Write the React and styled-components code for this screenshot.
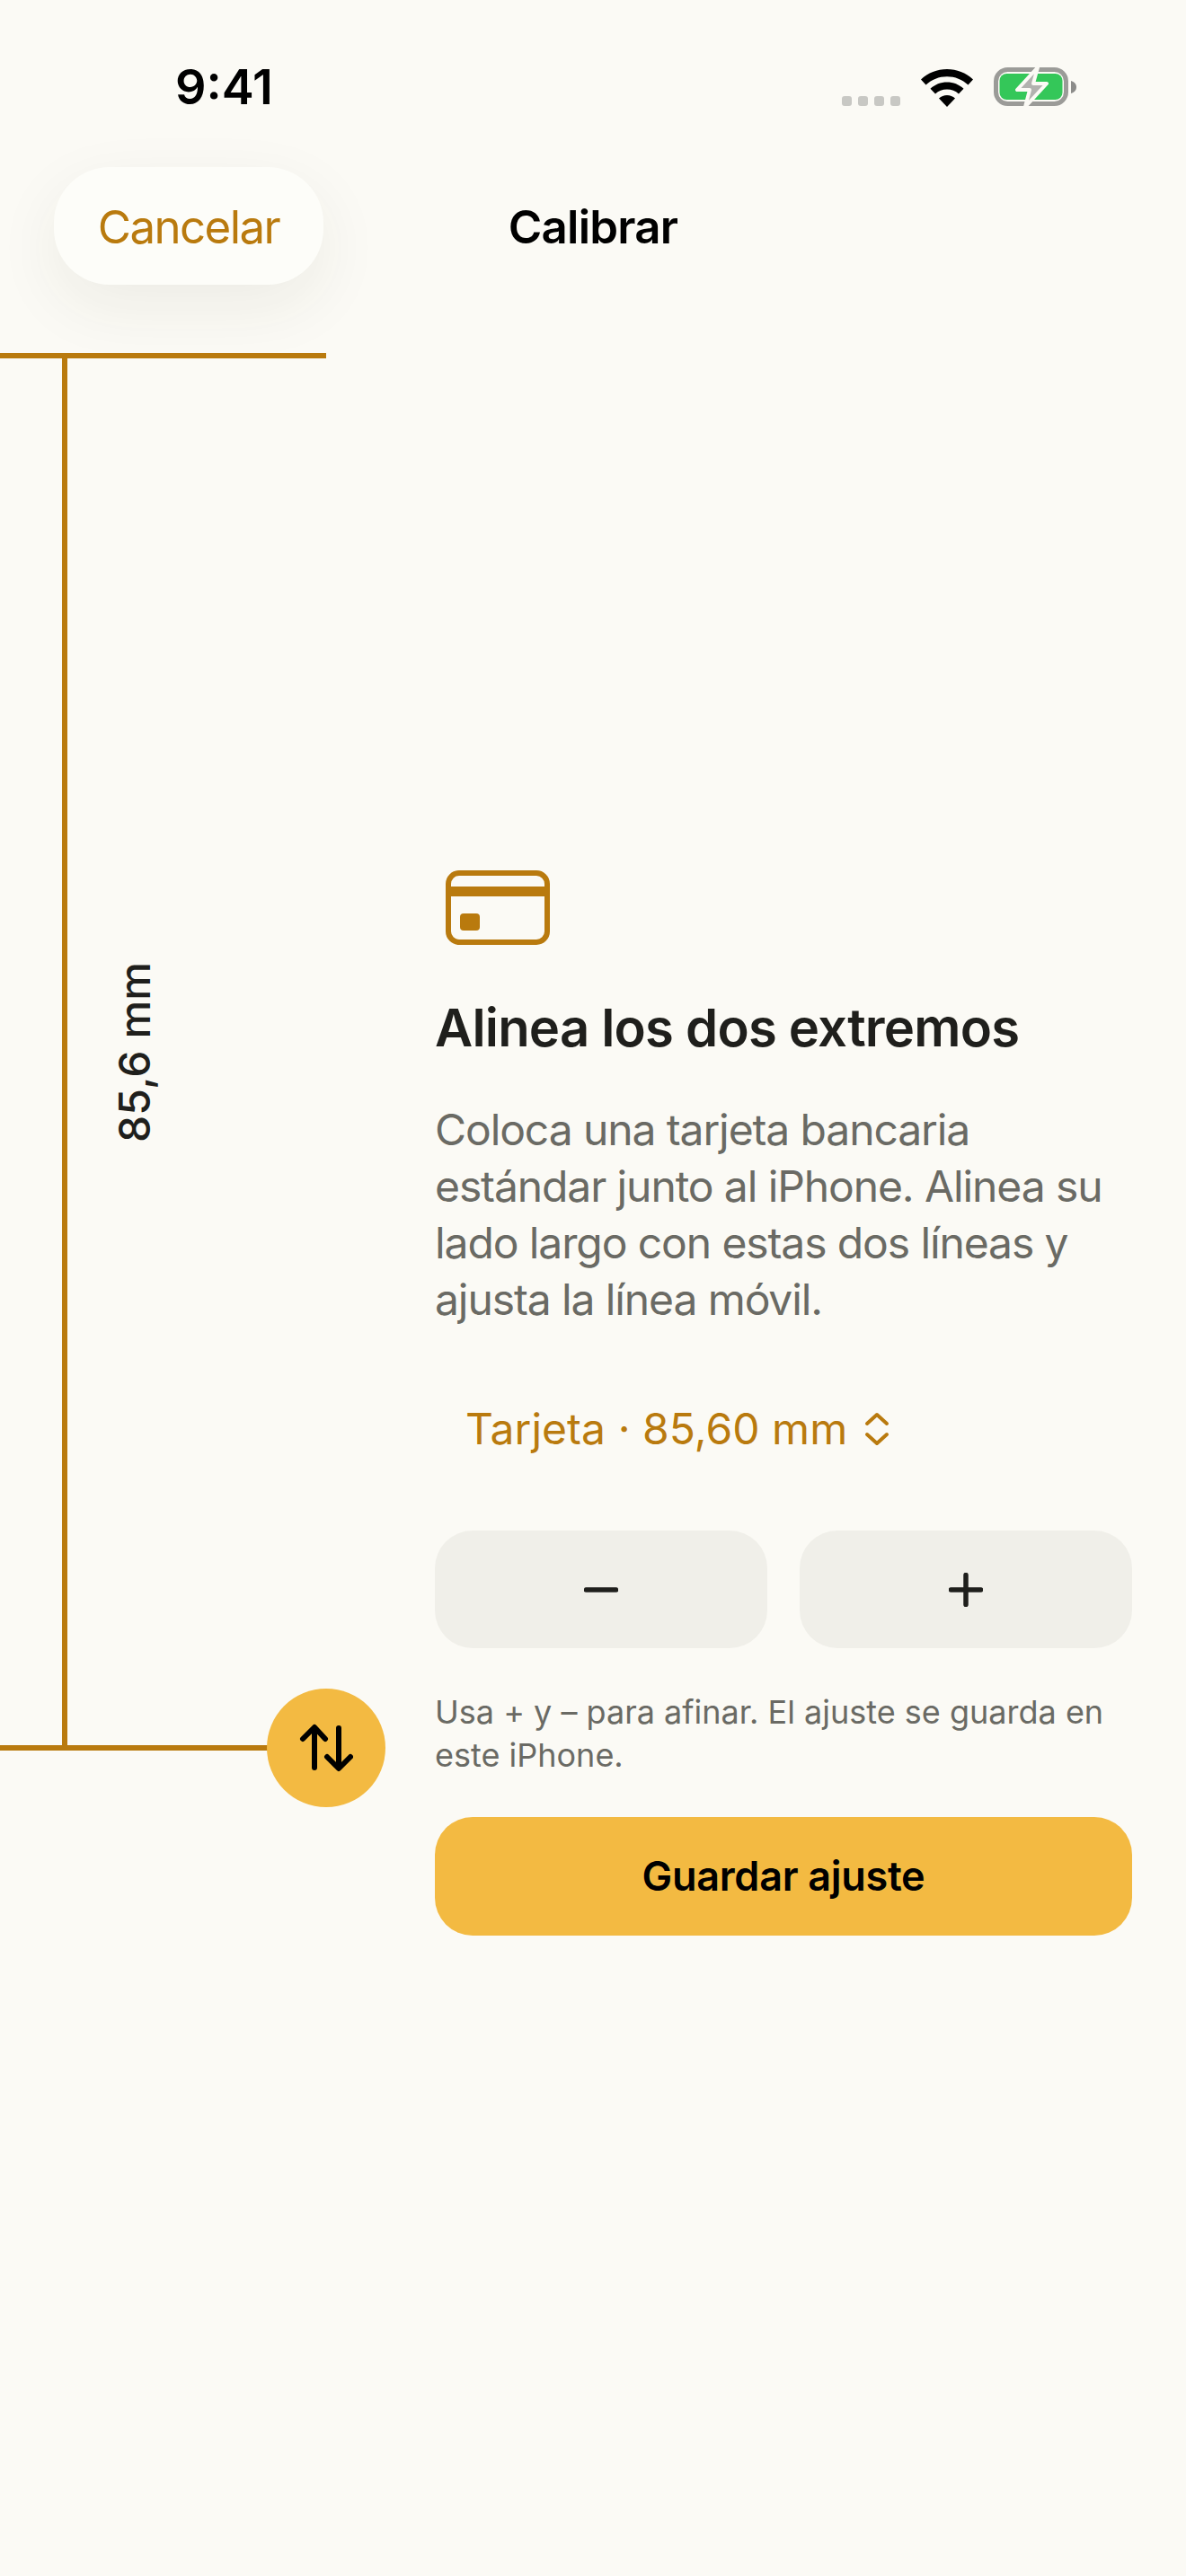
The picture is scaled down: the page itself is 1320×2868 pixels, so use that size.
import React from "react";
import styled, { createGlobalStyle } from "styled-components";

const amber = "#B97A0E";
const yellow = "#F3BA42";
const paper = "#FBFAF5";

const Global = createGlobalStyle`
  html, body { margin: 0; padding: 0; background: ${paper}; }
  * { box-sizing: border-box; }
  body { font-family: Inter, "Liberation Sans", sans-serif; }
`;

const Page = styled.div`
  width: 1320px;
  height: 2868px;
  overflow: hidden;
  background: ${paper};
  color: #1f1f1c;
`;

const StatusBar = styled.div`
  height: 186px;
  display: flex;
  justify-content: space-between;
  align-items: flex-start;
  padding: 65px 122px 0 195px;
`;

const Clock = styled.div`
  font-size: 54px;
  line-height: 64px;
  font-weight: 600;
  color: #000;
`;

const StatusIcons = styled.div`
  display: flex;
  align-items: flex-end;
  gap: 23px;
  padding-top: 10px;
`;

const Dots = styled.div`
  display: flex;
  gap: 7px;
  padding-bottom: 1px;
`;

const Dot = styled.span`
  width: 11px;
  height: 11px;
  border-radius: 3px;
  background: #c8c8c4;
`;

const NavBar = styled.div`
  height: 131px;
  display: grid;
  grid-template-columns: 1fr auto 1fr;
  align-items: center;
  padding: 0 60px;
`;

const CancelPill = styled.button`
  justify-self: start;
  width: 300px;
  height: 131px;
  border: 0;
  border-radius: 62px;
  padding: 2px 0 0;
  background: #fdfdf9;
  color: ${amber};
  font: 400 51px/62px Inter, sans-serif;
  letter-spacing: -1.6px;
  box-shadow: 0 24px 72px rgba(60, 50, 30, 0.07);
`;

const NavTitle = styled.div`
  padding-top: 2px;
  font-size: 51px;
  line-height: 62px;
  font-weight: 600;
  letter-spacing: -0.8px;
  color: #000;
`;

const Body = styled.div`
  display: flex;
  align-items: flex-start;
  margin-top: 76px;
`;

const Ruler = styled.div`
  position: relative;
  flex: none;
  width: 363px;
  height: 1556px;
  border-top: 6px solid ${amber};
  border-bottom: 6px solid ${amber};
  padding-left: 69px;
`;

const RulerStem = styled.div`
  height: 100%;
  border-left: 6px solid ${amber};
  padding-left: 47px;
  display: flex;
  align-items: center;
`;

const RulerLabel = styled.div`
  writing-mode: vertical-rl;
  transform: rotate(180deg);
  font-size: 48px;
  line-height: 56px;
  font-weight: 500;
  letter-spacing: 0.1px;
  white-space: nowrap;
  color: #1f1f1c;
`;

const Handle = styled.div`
  position: absolute;
  right: -66px;
  bottom: -69px;
  width: 132px;
  height: 132px;
  border-radius: 50%;
  background: ${yellow};
  display: flex;
  align-items: center;
  justify-content: center;
`;

const Content = styled.div`
  width: 776px;
  margin-left: 121px;
  padding-top: 576px;
  display: flex;
  flex-direction: column;
  align-items: stretch;
`;

const CardIcon = styled.svg`
  display: block;
  margin-left: 12px;
  width: 116px;
  height: 83px;
`;

const Title = styled.h1`
  margin: 56px 0 0;
  font-size: 58px;
  line-height: 72px;
  font-weight: 600;
  letter-spacing: -0.8px;
  color: #1f1f1c;
`;

const Paragraph = styled.p`
  margin: 46px 0 0;
  font-size: 48px;
  line-height: 63px;
  font-weight: 400;
  letter-spacing: -1.1px;
  color: #6a6a64;
`;

const CardSelect = styled.div`
  margin: 81px 0 0 34px;
  height: 63px;
  display: flex;
  align-items: center;
  gap: 19px;
  font-size: 48px;
  line-height: 63px;
  letter-spacing: 0.05px;
  color: ${amber};
`;

const StepRow = styled.div`
  display: grid;
  grid-template-columns: 1fr 1fr;
  gap: 36px;
  margin-top: 82px;
`;

const StepButton = styled.button`
  height: 131px;
  border: 0;
  border-radius: 42px;
  background: #f0efe9;
  display: flex;
  align-items: center;
  justify-content: center;
  padding: 0;
`;

const Hint = styled.p`
  margin: 47px 0 0;
  font-size: 36px;
  line-height: 48px;
  color: #6a6a64;
`;

const SaveButton = styled.button`
  margin-top: 45px;
  height: 132px;
  border: 0;
  border-radius: 42px;
  background: ${yellow};
  color: #000;
  font: 600 45px/54px Inter, sans-serif;
  letter-spacing: -0.3px;
`;

const Wifi = () => (
  <svg width="58" height="42" viewBox="0 0 58 42">
    <path d="M29 0C18 0 8 4 0 11.5L5.5 17.5C12 11.5 20 8.200 29 8.200S46 11.500 52.500 17.500L58 11.500C50 4 40 0 29 0Z" fill="#000" />
    <path d="M29 14.500C22 14.500 15.500 17 10.500 21.800L16 27.500C19.500 24.300 24 22.500 29 22.500S38.500 24.300 42 27.500L47.500 21.800C42.500 17 36 14.500 29 14.500Z" fill="#000" />
    <path d="M29 29C25.500 29 22.500 30.200 20 32.500L29 42L38 32.500C35.500 30.200 32.500 29 29 29Z" fill="#000" />
  </svg>
);

const Battery = () => (
  <svg width="92" height="44" viewBox="0 0 92 44">
    <rect x="2.500" y="2.500" width="78" height="38" rx="13" fill="none" stroke="#9b9b98" strokeWidth="5" />
    <rect x="6.500" y="7" width="70" height="29" rx="8" fill="#34c759" />
    <path d="M86 15C89.500 16 92 18.500 92 22S89.500 28 86 29Z" fill="#8c8c8a" />
    <path d="M49 0L26 25H40L35 44L59 18H44Z" fill="#b2b2af" stroke={paper} strokeWidth="4" strokeLinejoin="round" />
  </svg>
);

export default function App() {
  return (
    <Page>
      <Global />
      <StatusBar>
        <Clock>9:41</Clock>
        <StatusIcons>
          <Dots><Dot /><Dot /><Dot /><Dot /></Dots>
          <Wifi />
          <Battery />
        </StatusIcons>
      </StatusBar>
      <NavBar>
        <CancelPill>Cancelar</CancelPill>
        <NavTitle>Calibrar</NavTitle>
      </NavBar>
      <Body>
        <Ruler>
          <RulerStem>
            <RulerLabel>85,6 mm</RulerLabel>
          </RulerStem>
          <Handle>
            <svg width="60" height="60" viewBox="0 0 60 60" fill="none" stroke="#000" strokeWidth="6" strokeLinecap="round" strokeLinejoin="round">
              <path d="M17 52V8M4 20L17 7L29 20" />
              <path d="M44 8V52M31 40L44 53L57 40" />
            </svg>
          </Handle>
        </Ruler>
        <Content>
          <CardIcon viewBox="0 0 116 83">
            <rect x="3" y="3" width="110" height="77" rx="12" fill="none" stroke={amber} strokeWidth="6" />
            <rect x="3" y="18" width="110" height="11" fill={amber} />
            <rect x="16" y="48" width="22" height="19" rx="4" fill={amber} />
          </CardIcon>
          <Title>Alinea los dos extremos</Title>
          <Paragraph>
            Coloca una tarjeta bancaria estándar junto al iPhone. Alinea su lado largo con estas dos líneas y ajusta la línea móvil.
          </Paragraph>
          <CardSelect>
            Tarjeta · 85,60 mm
            <svg width="28" height="38" viewBox="0 0 28 38" fill="none" stroke={amber} strokeWidth="4" strokeLinecap="round" strokeLinejoin="round">
              <path d="M3 13L14 3L25 13" />
              <path d="M3 25L14 35L25 25" />
            </svg>
          </CardSelect>
          <StepRow>
            <StepButton aria-label="menos">
              <svg width="38" height="38" viewBox="0 0 38 38" fill="none" stroke="#1f1f1c" strokeWidth="5.500" strokeLinecap="round">
                <path d="M2.500 19H35.500" />
              </svg>
            </StepButton>
            <StepButton aria-label="más">
              <svg width="38" height="38" viewBox="0 0 38 38" fill="none" stroke="#1f1f1c" strokeWidth="5.500" strokeLinecap="round">
                <path d="M2.500 19H35.500M19 2.500V35.500" />
              </svg>
            </StepButton>
          </StepRow>
          <Hint>Usa + y – para afinar. El ajuste se guarda en este iPhone.</Hint>
          <SaveButton>Guardar ajuste</SaveButton>
        </Content>
      </Body>
    </Page>
  );
}
